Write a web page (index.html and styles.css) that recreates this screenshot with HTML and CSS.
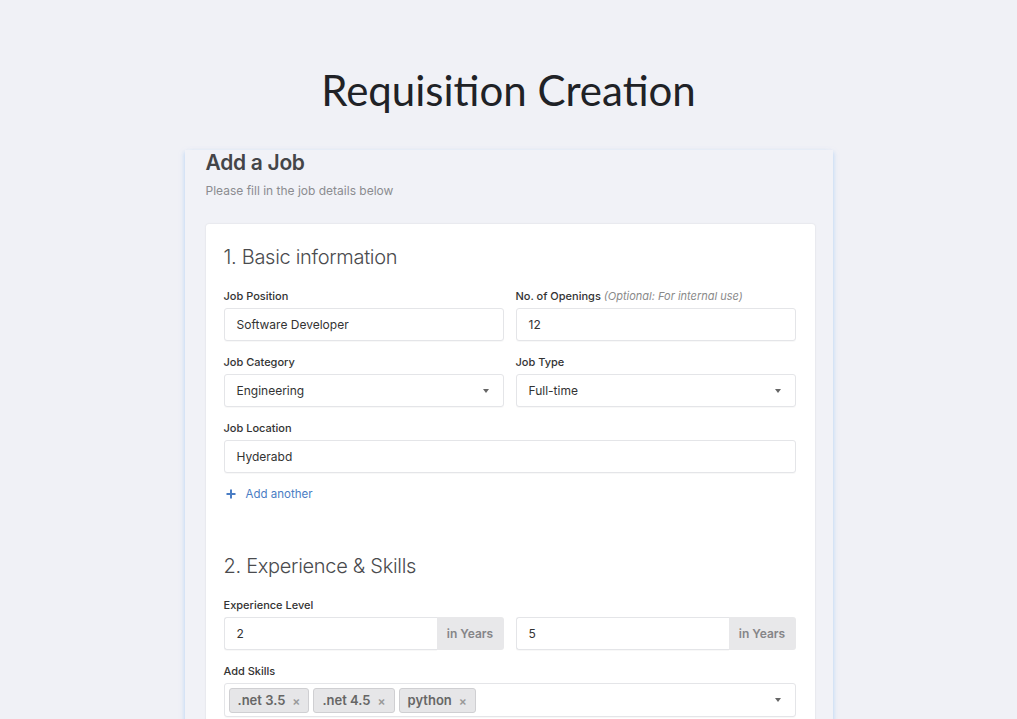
FILE: index.html
```html
<!DOCTYPE html>
<html>
<head>
<meta charset="utf-8">
<link rel="stylesheet" href="styles.css">
</head>
<body>
<h1 class="page-title">Requisition Creation</h1>
<div class="panel">
  <div class="panel-head">
    <h2 class="panel-title">Add a Job</h2>
    <p class="panel-sub">Please fill in the job details below</p>
  </div>
  <div class="card">
    <h3 class="section-title">1. Basic information</h3>
    <div class="row">
      <div class="field">
        <label class="label">Job Position</label>
        <div class="input">Software Developer</div>
      </div>
      <div class="field">
        <label class="label">No. of Openings <em class="hint">(Optional: For internal use)</em></label>
        <div class="input">12</div>
      </div>
    </div>
    <div class="row">
      <div class="field">
        <label class="label">Job Category</label>
        <div class="input select">Engineering<span class="caret"></span></div>
      </div>
      <div class="field">
        <label class="label">Job Type</label>
        <div class="input select">Full-time<span class="caret"></span></div>
      </div>
    </div>
    <div class="row">
      <div class="field">
        <label class="label">Job Location</label>
        <div class="input">Hyderabd</div>
      </div>
    </div>
    <div class="add-another">
      <svg width="10" height="10" viewBox="0 0 10 10"><path d="M5 0.5v9M0.5 5h9" stroke="#4a7dc4" stroke-width="2"/></svg>
      <span>Add another</span>
    </div>

    <h3 class="section-title second">2. Experience &amp; Skills</h3>
    <div class="row">
      <div class="field">
        <label class="label">Experience Level</label>
        <div class="input-group">
          <div class="input grow">2</div>
          <div class="addon">in Years</div>
        </div>
      </div>
      <div class="field">
        <label class="label label-blank">&nbsp;</label>
        <div class="input-group">
          <div class="input grow">5</div>
          <div class="addon">in Years</div>
        </div>
      </div>
    </div>
    <div class="row">
      <div class="field">
        <label class="label">Add Skills</label>
        <div class="input select tags">
          <span class="tag">.net 3.5 <span class="x">×</span></span>
          <span class="tag">.net 4.5 <span class="x">×</span></span>
          <span class="tag">python <span class="x">×</span></span>
          <span class="caret"></span>
        </div>
      </div>
    </div>
  </div>
</div>
</body>
</html>
```

FILE: styles.css
```css
* { box-sizing: border-box; }
html, body { margin: 0; padding: 0; }
body {
  background: #f0f1f6;
  font-family: Inter, "Noto Sans", sans-serif;
  color: #333;
  height: 719px;
  overflow: hidden;
}
.page-title {
  margin: 0;
  padding-top: 64px;
  text-align: center;
  font-family: Lato, "Open Sans", sans-serif;
  font-weight: 400;
  font-size: 42px;
  line-height: 52px;
  color: #202226;
}
.panel {
  width: 648px;
  margin: 34px auto 0;
  padding: 0 18px 40px 21px;
  background: #f1f2f7;
  box-shadow: -3px 0 4px -2px rgba(170, 205, 245, 0.6), 3px 0 4px -2px rgba(170, 205, 245, 0.6);
  min-height: 600px;
}
.panel-title {
  margin: 0;
  font-size: 21px;
  line-height: 26px;
  font-weight: 600;
  color: #444548;
  letter-spacing: -0.3px;
}
.panel-sub {
  margin: 8px 0 0;
  font-size: 12px;
  line-height: 14px;
  color: #8b8c90;
}
.card {
  margin-top: 26px;
  background: #fff;
  border-radius: 3px;
  box-shadow: 0 0 2px rgba(0,0,0,0.12);
  padding: 20px 19px 20px 18px;
}
.section-title {
  margin: 0 0 19px;
  font-size: 20px;
  line-height: 26px;
  font-weight: 300;
  color: #4a4b4e;
  letter-spacing: -0.3px;
}
.section-title.second { margin-top: 52px; margin-bottom: 19px; }
.row {
  display: flex;
  gap: 12px;
  margin-bottom: 14px;
}
.field { flex: 1; display: flex; flex-direction: column; }
.label {
  font-size: 11px;
  line-height: 14px;
  font-weight: 500;
  color: #333;
  margin-bottom: 5px;
}
.hint { font-weight: 400; color: #8a8a8a; font-size: 11px; }
.input {
  height: 33px;
  border: 1px solid #e4e5e8;
  border-radius: 3px;
  background: #fff;
  font-size: 12px;
  color: #333;
  padding: 0 12px;
  display: flex;
  align-items: center;
  box-shadow: 0 1px 1px rgba(0,0,0,0.03);
}
.select { position: relative; }
.caret {
  position: absolute;
  right: 14px;
  top: 14px;
  width: 0;
  height: 0;
  border-left: 3.5px solid transparent;
  border-right: 3.5px solid transparent;
  border-top: 4px solid #666;
}
.add-another {
  display: flex;
  align-items: center;
  gap: 10px;
  margin-top: 6px;
  font-size: 11.5px;
  color: #4a7dc4;
  padding-left: 2px;
}
.input-group { display: flex; height: 33px; }
.input-group .grow {
  flex: 1;
  border-radius: 3px 0 0 3px;
  border-right: none;
}
.addon {
  width: 67px;
  background: #e8e8ea;
  border-radius: 0 3px 3px 0;
  font-size: 12px;
  font-weight: 600;
  color: #858588;
  display: flex;
  align-items: center;
  justify-content: center;
}
.tags { padding: 0 4px; gap: 4px; height: 34px; }
.tag {
  display: inline-flex;
  align-items: center;
  gap: 7px;
  height: 25px;
  padding: 0 8px;
  background: #e6e6e8;
  border: 1px solid #cfcfd2;
  border-radius: 3px;
  font-size: 13px;
  font-weight: 600;
  color: #666;
}
.tag .x { font-size: 12px; color: #999; }
```
